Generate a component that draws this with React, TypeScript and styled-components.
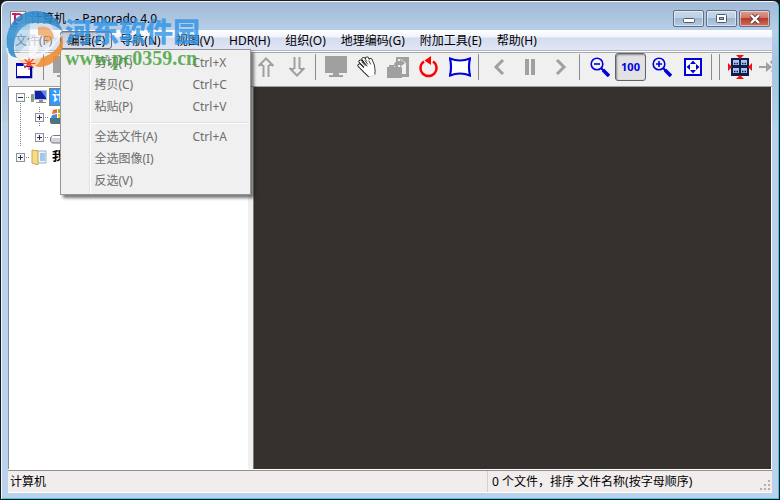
import React from "react";
import styled, { createGlobalStyle, css } from "styled-components";

const Global = createGlobalStyle`
  *, *::before, *::after { box-sizing: border-box; }
  html, body, #root { height: 100%; }
  body {
    margin: 0;
    background: #16161a;
    font: 12px/16px "Noto Sans", "Noto Sans CJK SC", sans-serif;
    color: #000;
    overflow: hidden;
  }
  button { font: inherit; color: inherit; margin: 0; padding: 0; border: 0; background: none; }
  ul { list-style: none; margin: 0; padding: 0; }
`;

const Frame = styled.div`
  position: relative;
  display: flex;
  flex-direction: column;
  height: 100%;
  padding: 0 7px 6px;
  border: 1px solid #17191d;
  border-radius: 7px 7px 0 0;
  background: linear-gradient(#9fb8d5 0, #b9cfe8 30px, #a9c4e0 60px, #b4cee6 118px, #bad2ec 122px);
  box-shadow: inset 1px 1px 0 #f2f8fd, inset -1px -1px 0 #2fcfe9;
`;

const TitleBar = styled.header`
  display: flex;
  justify-content: space-between;
  height: 29px;
  padding: 9px 0 0 2px;
`;

const Title = styled.h1`
  display: flex;
  align-items: center;
  gap: 4px;
  height: 18px;
  margin: 0;
  font-size: 12px;
  font-weight: 400;
  white-space: pre;
`;

const WindowButtons = styled.div`
  display: flex;
  gap: 2px;
  margin-right: 2px;
`;

const WindowButton = styled.button<{ $close?: boolean }>`
  display: grid;
  place-items: center;
  width: 31px;
  height: 17px;
  border: 1px solid #5f6f85;
  border-radius: 2px;
  box-shadow: inset 0 0 0 1px #ffffff80;
  background: ${(p) =>
    p.$close
      ? "linear-gradient(#dda093 0, #cc7465 48%, #b93a27 50%, #cc7060 100%)"
      : "linear-gradient(#c8d8ea 0, #bccfe3 48%, #9fb7d0 50%, #b4cbe2 100%)"};
`;

const MenuBar = styled.nav`
  display: flex;
  flex: none;
  gap: 1px;
  height: 21px;
  padding: 1px 0 0;
  background: linear-gradient(#fff 0, #f0f3fa 35%, #d5dcef 40%, #e0e6f5 100%);
  border-bottom: 1px solid #b2b6c2;
`;

const MenuSlot = styled.div`
  position: relative;
`;

const MenuButton = styled.button<{ $open?: boolean }>`
  height: 18px;
  padding: 1px 6px 0;
  border: 1px solid transparent;
  border-radius: 3px;
  line-height: 16px;
  white-space: nowrap;
  ${(p) =>
    p.$open &&
    css`
      border-color: #6b7077;
      background: linear-gradient(#c3c9d8, #d9deea);
      box-shadow: inset 1px 1px 1px #9aa0ae;
    `}
`;

const Dropdown = styled.ul`
  position: absolute;
  top: 18px;
  left: 0;
  z-index: 2;
  width: 191px;
  padding: 2px 1px;
  border: 1px solid #979797;
  background: linear-gradient(90deg, transparent 28px, #e2e3e3 28px, #e2e3e3 29px, #fff 29px, #fff 30px, transparent 30px) #f0f0f0;
  box-shadow: 3px 3px 3px #00000088;
`;

const DropdownItem = styled.button`
  display: flex;
  width: 100%;
  height: 22px;
  padding-left: 32px;
  align-items: center;
  color: #6d6d6d;
  text-align: left;
`;

const Label = styled.span`
  width: 98px;
`;

const Divider = styled.li`
  height: 8px;
  margin-left: 29px;
  padding-top: 4px;

  &::before {
    content: "";
    display: block;
    height: 2px;
    border-top: 1px solid #e0e0e0;
    background: #fff;
  }
`;

const ToolBar = styled.div`
  display: flex;
  flex: none;
  align-items: center;
  height: 36px;
  padding: 0 0 3px 1px;
  overflow: hidden;
  background: linear-gradient(#fff 0, #fff 1px, #a9a9a9 1px, #a9a9a9 2px, #f0f0f0 2px);
  border-bottom: 1px solid #a0a0a0;
`;

const ToolButton = styled.button<{ $pressed?: boolean }>`
  display: grid;
  flex: none;
  place-items: center;
  width: 31px;
  height: 28px;
  border-radius: 3px;
  color: #a0a0a0;

  svg { display: block; }

  ${(p) =>
    p.$pressed &&
    css`
      border: 1px solid #60646a;
      background: #e2e2e2;
      box-shadow: inset 1px 1px 2px #00000066;
      color: #0000e0;
      font-size: 11px;
      font-weight: 700;
      line-height: 12px;
    `}
`;

const ToolSeparator = styled.span`
  flex: none;
  width: 8px;
  height: 26px;
  background: linear-gradient(90deg, transparent 3px, #8c8c8c 3px, #8c8c8c 4px, transparent 4px);
`;

const Workspace = styled.main`
  display: grid;
  grid-template-columns: 240px 5px 1fr;
  flex: 1;
  min-height: 0;
  border-right: 1px solid #fff;
`;

const TreePane = styled.aside`
  padding-left: 6px;
  border-left: 1px solid #8a8d92;
  background: #fff;
  overflow: hidden;
`;

const Splitter = styled.div`
  background: #f0f0f0;
`;

const Viewer = styled.section`
  border-left: 1px solid #7a7774;
  background: #37312d;
`;

const Branch = styled.ul<{ $nested?: boolean }>`
  ${(p) => p.$nested && "padding-left: 19px;"}
`;

const Leaf = styled.li<{ $line?: "root" | "child" }>`
  background: ${(p) =>
    p.$line
      ? `repeating-linear-gradient(#808080 0, #808080 1px, #fff 1px, #fff 2px) 5px ${
          p.$line === "root" ? 10 : 0
        }px / 1px 100% no-repeat`
      : "none"};
`;

const Row = styled.div`
  display: flex;
  align-items: center;
  height: 20px;
  font-weight: 700;
  white-space: nowrap;
`;

const Expander = styled.button`
  width: 9px;
  height: 9px;
  flex: none;
  margin-left: 1px;

  svg { display: block; }
`;

const Dots = styled.span`
  width: 5px;
  height: 1px;
  flex: none;
  margin-right: 1px;
  background: repeating-linear-gradient(90deg, #fff 0, #fff 1px, #808080 1px, #808080 2px);
`;

const NodeName = styled.span<{ $selected?: boolean }>`
  margin-left: 2px;
  padding: 0 2px;
  border: 1px solid transparent;
  ${(p) =>
    p.$selected &&
    css`
      border: 1px dotted #c86400;
      background: #3399ff;
      color: #fff;
    `}
`;

const StatusBar = styled.footer`
  display: grid;
  grid-template-columns: 1fr 285px;
  flex: none;
  height: 24px;
  padding-top: 2px;
  background: linear-gradient(#fff 0, #fff 1px, #8f8f8f 1px, #8f8f8f 2px, #f1edec 2px);
  border-bottom: 1px solid #fff;
`;

const StatusCell = styled.div<{ $last?: boolean }>`
  display: flex;
  align-items: center;
  justify-content: space-between;
  padding-left: ${(p) => (p.$last ? 4 : 2)}px;
  ${(p) => p.$last && "border-left: 1px solid #d5d0cf;"}

  svg { align-self: flex-end; }
`;

const Watermark = styled.div`
  position: absolute;
  top: 9px;
  left: 4px;
  z-index: 3;
  display: flex;
  gap: 1px;
  pointer-events: none;
`;

const WatermarkText = styled.div`
  display: flex;
  flex-direction: column;
  padding-top: 6px;
`;

const SiteName = styled.span`
  color: #2e94e6;
  font: 900 27px/30px "Noto Sans CJK SC", sans-serif;
  opacity: 0.8;
`;

const SiteUrl = styled.span`
  color: #3f9f36;
  font: 700 20px/24px "Liberation Serif", serif;
  opacity: 0.8;
`;

const AppIcon = () => (
  <svg width="16" height="16" viewBox="0 0 16 16" aria-hidden="true">
    <rect x=".5" y=".5" width="15" height="15" fill="#fff" stroke="#858585" />
    <path d="M2 3h3v10M3 13h5M5 4c3-2 7-1 7 2s-4 4-7 2" fill="none" stroke="#c81e63" strokeWidth="2" />
  </svg>
);

const NewFolder = () => (
  <svg width="22" height="24" viewBox="0 0 22 24">
    <path d="M2.500 8.500h6l2 3h6v10h-14z" fill="#fff" stroke="#0000c8" />
    <path d="M2 8h7v3H2z" fill="#0000c8" />
    <path d="M17.500 11v11.500H2" fill="none" stroke="#000090" strokeWidth="1.500" />
    <path d="M15 2v13M8.500 8.500h13M10.500 4l9 9M19.500 4l-9 9" stroke="#f5281e" strokeWidth="1.200" />
  </svg>
);

const Screen = () => (
  <svg width="22" height="22" viewBox="0 0 22 22" fill="currentColor">
    <path d="M0 0h22v17h-8v2h4v2H4v-2h4v-2H0z" />
  </svg>
);

const ArrowIcon = ({ down }: { down?: boolean }) => (
  <svg width="18" height="22" viewBox="0 0 18 22" fill="none" stroke="currentColor" strokeWidth="2">
    {down ? (
      <path d="M6.500 1v12M11.500 1v12M1.500 12 9 19.500 16.500 12M2 13h4M12 13h4" />
    ) : (
      <path d="M6.500 21V9M11.500 21V9M1.500 10 9 2.500 16.500 10M2 9h4M12 9h4" />
    )}
  </svg>
);

const Hand = () => (
  <svg width="20" height="22" viewBox="0 0 20 22" fill="none" strokeLinecap="round" strokeLinejoin="round">
    <g stroke="#161616" strokeWidth="4">
      <path d="M2.500 9.500 8 15M3.500 5.500 10 12M6.500 3 12 10M10 2.500 14 10M13.500 4 16 10l.500 5" />
      <path d="M8 12l7-1 1.500 7-4 1.500-4-4z" />
    </g>
    <g stroke="#fff" strokeWidth="2.400">
      <path d="M2.500 9.500 8 15M3.500 5.500 10 12M6.500 3 12 10M10 2.500 14 10M13.500 4 16 10l.500 5" />
      <path d="M8 12l7-1 1.500 7-4 1.500-4-4z" fill="#fff" />
    </g>
    <path d="M5 6l3 3.500M8 4.500l2.500 3.500M12 5l1.500 3" stroke="#161616" strokeWidth=".8" />
    <path d="M12 21.500 18 19" stroke="#f0f0f0" strokeWidth="1.500" />
  </svg>
);

const CopyTo = () => (
  <svg width="22" height="21" viewBox="0 0 22 21">
    <path d="M9 0h13v20H13V10H9z" fill="currentColor" />
    <path d="M11 2h3l5 4v11h-5v-5l-3-2V8h2V5h-2z" fill="#f0f0f0" />
    <path d="M7 9c0-4 2-5 6-5V2l5 4-5 4V7q-4 0-4 3z" fill="currentColor" />
    <path d="M0 10h2V8h5v2h8v11H0z" fill="currentColor" />
  </svg>
);

const Rotate = () => (
  <svg width="20" height="22" viewBox="0 0 20 22">
    <path d="M5 5.500a8 8 0 1 0 9 0" fill="none" stroke="#fe0000" strokeWidth="2.500" />
    <path d="M12 0v9L5.500 4.500z" fill="#fe0000" />
  </svg>
);

const Warp = () => (
  <svg width="22" height="20" viewBox="0 0 22 20">
    <path d="M1 1.500q10 4 20 0-2 8.500 0 17-10-4-20 0 2-8.500 0-17z" fill="#fff" stroke="#0000dc" strokeWidth="2.200" />
  </svg>
);

const Chevron = ({ right }: { right?: boolean }) => (
  <svg width="12" height="18" viewBox="0 0 12 18" fill="none" stroke="currentColor" strokeWidth="3">
    <path d={right ? "M2 2l7 7-7 7" : "M10 2L3 9l7 7"} />
  </svg>
);

const Pause = () => (
  <svg width="10" height="16" viewBox="0 0 10 16" fill="currentColor">
    <path d="M0 0h4v16H0zM6 0h4v16H6z" />
  </svg>
);

const Zoom = ({ plus }: { plus?: boolean }) => (
  <svg width="20" height="20" viewBox="0 0 20 20" fill="none" stroke="#0000dc">
    <circle cx="7" cy="7" r="5.800" strokeWidth="1.600" />
    <path d="M11 11l3 3" strokeWidth="2" />
    <path d="M13 13l6 6" strokeWidth="3.600" />
    <path d={plus ? "M4 7h6M7 4v6" : "M4 7h6"} strokeWidth="1.600" />
  </svg>
);

const Fit = () => (
  <svg width="18" height="18" viewBox="0 0 18 18">
    <rect x="1" y="1" width="16" height="16" fill="#fff" stroke="#0000dc" strokeWidth="2" />
    <path d="M9 2.500l3 3.500H6zM9 15.500l3-3.500H6zM2.500 9L6 6v6zM15.500 9L12 6v6z" fill="#0000dc" />
  </svg>
);

const Tiles = () => (
  <svg width="24" height="24" viewBox="0 0 24 24">
    <path d="M3 3h18v18H3z" fill="#111c4a" />
    <path d="M5 5h6v5H5zM13 5h6v5h-6zM5 13h6v5H5zM13 13h6v5h-6z" fill="#a9c6ee" />
    <path d="M6 8.500h1.500M8.500 8.500H10M14 8.500h1.500M16.500 8.500H18M6 16.500h1.500M8.500 16.500H10M14 16.500h1.500M16.500 16.500H18" stroke="#111c4a" strokeWidth="1.500" />
    <path d="M8 0h8l-4 4zM8 24h8l-4-4zM0 8v8l4-4zM24 8v8l-4-4z" fill="#f01010" />
  </svg>
);

const GoTo = () => (
  <svg width="24" height="20" viewBox="0 0 24 20" fill="currentColor">
    <path d="M0 9h7V5l6 5-6 5v-4H0zM11 5l4-4 8 3v14l-8-1-3-3 3-4z" />
  </svg>
);

const ExpandIcon = ({ open }: { open?: boolean }) => (
  <svg width="9" height="9" viewBox="0 0 9 9">
    <rect x=".5" y=".5" width="8" height="8" fill="#f7f8fa" stroke="#919191" />
    <path d={open ? "M2 4.500h5" : "M2 4.500h5M4.500 2v5"} stroke="#24345c" />
  </svg>
);

const Computer = () => (
  <svg width="16" height="16" viewBox="0 0 16 16">
    <path d="M0 5h3v8H0z" fill="#8f9a9a" />
    <path d="M1 7v4" stroke="#3fc63b" />
    <path d="M3.500 1.500h12v9h-12z" fill="#1022a8" stroke="#b9bcc4" />
    <path d="M10 2h5v7z" fill="#5d86ee" />
    <path d="M8 11h4v2h3v1H5v-1h3z" fill="#8a8d94" />
  </svg>
);

const SystemDrive = () => (
  <svg width="16" height="16" viewBox="0 0 16 16">
    <path d="M0 9h16v5q-1 1-3 1H3q-3 0-3-2z" fill="#4d7486" />
    <path d="M3 1l4-1v4L2 5z" fill="#ef6a2c" />
    <path d="M8 0h5v4H8z" fill="#83c13f" />
    <path d="M2 6l5-1v4H1z" fill="#3f8fe0" />
    <path d="M8 5h5v4H8z" fill="#fac82a" />
  </svg>
);

const Drive = () => (
  <svg width="16" height="16" viewBox="0 0 16 16">
    <path d="M.5 9Q2 6 5 6.500h11V14H3Q0 14 .5 9z" fill="#d4d5da" stroke="#74757d" />
    <path d="M2 8h13" stroke="#fff" strokeWidth="2" />
  </svg>
);

const Documents = () => (
  <svg width="16" height="16" viewBox="0 0 16 16">
    <path d="M5 2h10v12H5z" fill="#eef5fb" stroke="#9ab2c4" />
    <path d="M9 5h5M9 7h5M9 9h5M9 11h5" stroke="#5b9ed6" />
    <path d="M1 1l6 1v14l-6-2z" fill="#f6dc86" stroke="#cba84f" />
  </svg>
);

const SizeGrip = () => (
  <svg width="12" height="12" viewBox="0 0 12 12" fill="#b5b0af">
    <path d="M8 0h2v2H8zM4 4h2v2H4zM8 4h2v2H8zM0 8h2v2H0zM4 8h2v2H4zM8 8h2v2H8z" />
  </svg>
);

const SwirlLogo = () => (
  <svg width="59" height="58" viewBox="0 0 59 58" aria-hidden="true">
    <circle cx="29" cy="27" r="21" fill="#eef3fa" opacity=".5" />
    <path d="M3 41C-2 22 8 3 28 1c14-1 25 6 30 21-7-7-14-9-22-9h-8C17 14 9 24 9 38c0 4 1 7 3 10C7 47 4 45 3 41z" fill="#2a8bcb" opacity=".85" />
    <path d="M24 19h9v22c-2 3-5 5-9 6z" fill="#fff" opacity=".6" />
    <path d="M13 17c4-4 9-4 12-4v10c-2 9-6 17-13 20-4-9-4-18 1-26z" fill="#6db3e2" opacity=".35" />
    <path d="M33 17c9-2 15 2 16 11l-8 6c0-6-2-9-8-9z" fill="#f08a2c" opacity=".6" />
    <path d="M57 25c5 17-8 32-24 32l-3-1c3-2 5-4 6-8 13-4 20-12 21-23z" fill="#f08a2c" opacity=".85" />
    <path d="M10 47c8 3 18 3 26 1-1 4-3 6-6 8-8 0-15-3-20-9z" fill="#f08a2c" opacity=".3" />
    <path d="M2 38c1 9 6 12 14 11 17-1 29-8 41-25" fill="none" stroke="#fff" strokeWidth="2" opacity=".6" />
  </svg>
);

const menusBefore = ["文件(F)"];
const menusAfter = ["导航(N)", "视图(V)", "HDR(H)", "组织(O)", "地理编码(G)", "附加工具(E)", "帮助(H)"];

const editItems = [
  [
    { label: "剪切(T)", keys: "Ctrl+X" },
    { label: "拷贝(C)", keys: "Ctrl+C" },
    { label: "粘贴(P)", keys: "Ctrl+V" },
  ],
  [
    { label: "全选文件(A)", keys: "Ctrl+A" },
    { label: "全选图像(I)", keys: "" },
    { label: "反选(V)", keys: "" },
  ],
];

type Tool = { name: string; icon: React.ReactNode; off?: boolean; pressed?: boolean };

const toolGroups: Tool[][] = [
  [{ name: "新建文件夹", icon: <NewFolder /> }],
  [
    { name: "全屏", icon: <Screen />, off: true },
    { name: "打印", icon: <Screen />, off: true },
    { name: "保存", icon: <Screen />, off: true },
  ],
  [
    { name: "剪切", icon: <CopyTo />, off: true },
    { name: "拷贝", icon: <CopyTo />, off: true },
  ],
  [
    { name: "后退", icon: <Chevron />, off: true },
    { name: "向上", icon: <ArrowIcon />, off: true },
    { name: "向下", icon: <ArrowIcon down />, off: true },
  ],
  [
    { name: "显示器", icon: <Screen />, off: true },
    { name: "移动", icon: <Hand /> },
    { name: "复制到", icon: <CopyTo />, off: true },
    { name: "旋转", icon: <Rotate /> },
    { name: "全景", icon: <Warp /> },
  ],
  [
    { name: "上一个", icon: <Chevron />, off: true },
    { name: "暂停", icon: <Pause />, off: true },
    { name: "下一个", icon: <Chevron right />, off: true },
  ],
  [
    { name: "缩小", icon: <Zoom /> },
    { name: "原始大小", icon: "100", pressed: true },
    { name: "放大", icon: <Zoom plus /> },
    { name: "适合窗口", icon: <Fit /> },
  ],
  [],
  [
    { name: "平铺", icon: <Tiles /> },
    { name: "转到", icon: <GoTo />, off: true },
  ],
];

export default function App() {
  return (
    <>
      <Global />
      <Frame>
        <TitleBar>
          <Title>
            <AppIcon />
            计算机   - Panorado 4.0
          </Title>
          <WindowButtons>
            <WindowButton aria-label="最小化">
              <svg width="12" height="9" viewBox="0 0 12 9">
                <rect x=".5" y="4.500" width="11" height="4" rx="1" fill="#fff" stroke="#4f5866" />
              </svg>
            </WindowButton>
            <WindowButton aria-label="最大化">
              <svg width="12" height="10" viewBox="0 0 12 10">
                <rect x=".5" y=".5" width="10" height="8" rx="1" fill="#fff" stroke="#4f5866" />
                <rect x="3.500" y="3.500" width="4" height="2" fill="#9fb7d0" stroke="#4f5866" />
              </svg>
            </WindowButton>
            <WindowButton $close aria-label="关闭">
              <svg width="12" height="10" viewBox="0 0 12 10">
                <path d="M2 1l8 8M10 1L2 9" stroke="#5a3a3a" strokeWidth="4" />
                <path d="M2 1l8 8M10 1L2 9" stroke="#fff" strokeWidth="2.400" />
              </svg>
            </WindowButton>
          </WindowButtons>
        </TitleBar>

        <MenuBar>
          {menusBefore.map((m) => (
            <MenuButton key={m}>{m}</MenuButton>
          ))}
          <MenuSlot>
            <MenuButton $open aria-expanded="true">编辑(E)</MenuButton>
            <Dropdown>
              {editItems.map((group, i) => (
                <React.Fragment key={i}>
                  {i > 0 && <Divider role="separator" />}
                  {group.map((item) => (
                    <li key={item.label}>
                      <DropdownItem disabled>
                        <Label>{item.label}</Label>
                        {item.keys && <span>{item.keys}</span>}
                      </DropdownItem>
                    </li>
                  ))}
                </React.Fragment>
              ))}
            </Dropdown>
          </MenuSlot>
          {menusAfter.map((m) => (
            <MenuButton key={m}>{m}</MenuButton>
          ))}
        </MenuBar>

        <ToolBar role="toolbar">
          {toolGroups.map((group, i) => (
            <React.Fragment key={i}>
              {i > 0 && <ToolSeparator />}
              {group.map((tool) => (
                <ToolButton key={tool.name} aria-label={tool.name} disabled={tool.off} $pressed={tool.pressed}>
                  {tool.icon}
                </ToolButton>
              ))}
            </React.Fragment>
          ))}
        </ToolBar>

        <Workspace>
          <TreePane>
            <Branch>
              <Leaf $line="root">
                <Row>
                  <Expander aria-label="折叠"><ExpandIcon open /></Expander>
                  <Dots />
                  <Computer />
                  <NodeName $selected>计算机</NodeName>
                </Row>
                <Branch $nested>
                  <Leaf $line="child">
                    <Row>
                      <Expander aria-label="展开"><ExpandIcon /></Expander>
                      <Dots />
                      <SystemDrive />
                    </Row>
                  </Leaf>
                  <Leaf>
                    <Row>
                      <Expander aria-label="展开"><ExpandIcon /></Expander>
                      <Dots />
                      <Drive />
                    </Row>
                  </Leaf>
                </Branch>
              </Leaf>
              <Leaf>
                <Row>
                  <Expander aria-label="展开"><ExpandIcon /></Expander>
                  <Dots />
                  <Documents />
                  <NodeName>我的文档</NodeName>
                </Row>
              </Leaf>
            </Branch>
          </TreePane>
          <Splitter />
          <Viewer />
        </Workspace>

        <StatusBar>
          <StatusCell>计算机</StatusCell>
          <StatusCell $last>
            0 个文件，排序 文件名称(按字母顺序)
            <SizeGrip />
          </StatusCell>
        </StatusBar>

        <Watermark>
          <SwirlLogo />
          <WatermarkText>
            <SiteName>河东软件园</SiteName>
            <SiteUrl>www.pc0359.cn</SiteUrl>
          </WatermarkText>
        </Watermark>
      </Frame>
    </>
  );
}
